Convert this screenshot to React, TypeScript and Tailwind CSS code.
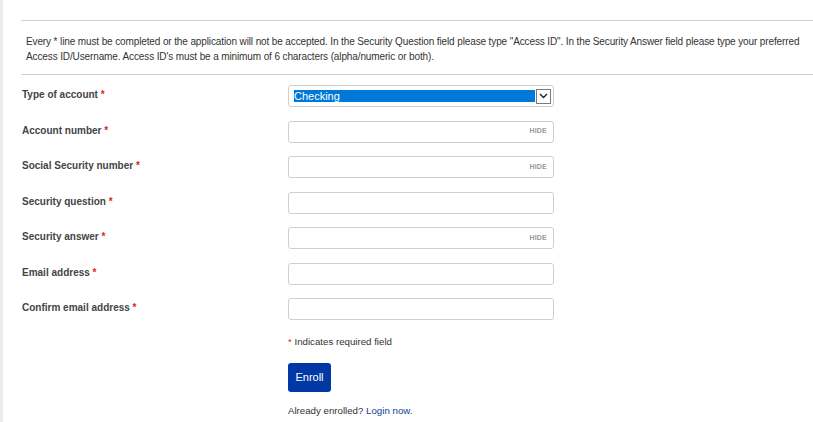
import React from 'react';

const fields = [
  {id: 'account-number', label: 'Account number', hide: true},
  {id: 'ssn', label: 'Social Security number', hide: true},
  {id: 'security-question', label: 'Security question', hide: false},
  {id: 'security-answer', label: 'Security answer', hide: true},
  {id: 'email', label: 'Email address', hide: false},
  {id: 'confirm-email', label: 'Confirm email address', hide: false},
];

function Label({text}: {text: string}) {
  return (
    <div className="pt-[2px] text-[10px] leading-[15px] font-bold text-[#444]">
      {text} <span className="text-[#e0211b]">*</span>
    </div>
  );
}

export default function App() {
  return (
    <div
      className="min-h-[422px] border-l-[3px] border-[#ebebeb] bg-white pl-[18px]"
      style={{fontFamily: '"Liberation Sans", Arial, sans-serif'}}
    >
      <div className="pt-5">
        <div className="border-t border-[#d0d0d0]" />
        {/* Intro */}
        <p className="pt-[13px] pr-[2px] pb-[10px] pl-[5px] text-[10px] leading-[15px] tracking-[-0.12px] text-[#333]">
          Every * line must be completed or the application will not be accepted. In the Security
          Question field please type "Access ID". In the Security Answer field please type your
          preferred Access ID/Username. Access ID's must be a minimum of 6 characters (alpha/numeric
          or both).
        </p>
        <div className="border-t border-[#d0d0d0]" />
      </div>

      <div className="flex flex-col gap-[13.5px] pt-[10px] pl-[1px]">
        <div className="grid grid-cols-[266px_266px]">
          <Label text="Type of account" />
          <div className="flex h-[22px] items-center rounded-[3px] border border-[#cfcfcf] bg-white pr-[2px] pl-[5px]">
            <div className="flex h-[12px] flex-1 items-center bg-[#0078d7] text-[11px] text-white">
              Checking
            </div>
            <div className="ml-[1px] flex h-[15px] w-[15px] items-center justify-center border border-[#7a7a7a] bg-white">
              <svg width="9" height="6" viewBox="0 0 9 6">
                <path d="M1 1l3.5 3.5L8 1" fill="none" stroke="#222" strokeWidth="1.4" />
              </svg>
            </div>
          </div>
        </div>

        {fields.map((f) => (
          <div key={f.id} className="grid grid-cols-[266px_266px]">
            <Label text={f.label} />
            <div className="flex h-[22px] items-center justify-end rounded-[3px] border border-[#cfcfcf] bg-white pr-[6px]">
              {f.hide && (
                <span className="text-[7px] font-bold tracking-[0.2px] text-[#999]">HIDE</span>
              )}
            </div>
          </div>
        ))}
      </div>

      <div className="pl-[267px]">
        <div className="pt-[15px] text-[9.7px] text-[#333]">
          <span className="text-[#e0211b]">*</span> Indicates required field
        </div>
        <button className="mt-[13px] h-[29px] w-[43px] rounded-[3px] bg-[#0039a6] text-[11px] text-white">
          Enroll
        </button>
        <div className="pt-[12px] text-[9.7px] text-[#333]">
          Already enrolled? <a className="text-[#0b3f94]">Login now</a>.
        </div>
      </div>
    </div>
  );
}
